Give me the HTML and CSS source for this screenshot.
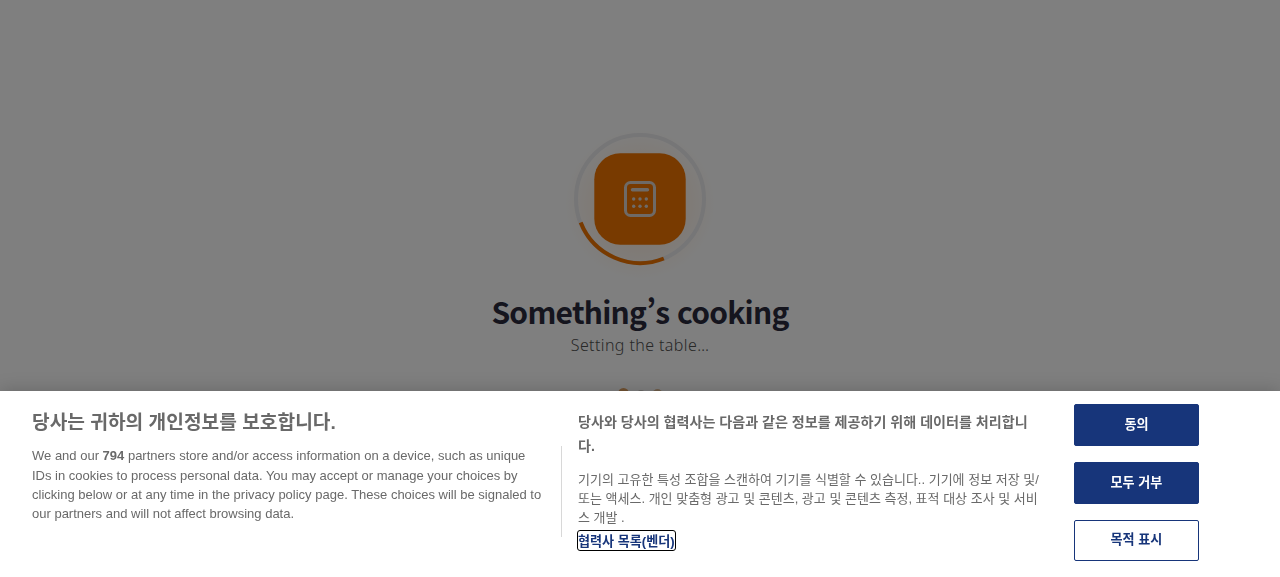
FILE: index.html
```html
<!DOCTYPE html>
<html lang="ko">
<head>
  <meta charset="UTF-8" />
  <meta name="viewport" content="width=device-width, initial-scale=1.0" />
  <title>Something’s cooking</title>
  <link rel="stylesheet" href="styles.css">
</head>
<body>

  <main class="loader">
    <svg class="loader-icon" width="160" height="160" viewBox="0 0 160 160" fill="none">
      <defs>
        <radialGradient id="glow">
          <stop offset="0.5" stop-color="#f47a00" stop-opacity="0.1" />
          <stop offset="1" stop-color="#f47a00" stop-opacity="0" />
        </radialGradient>
      </defs>
      <circle cx="80" cy="84" r="76" fill="url(#glow)" />
      <circle cx="80" cy="79" r="64" stroke="#ececee" stroke-width="4" />
      <path d="M20.7 102.5A64 64 0 0 0 103.8 138.5" stroke="#f07400" stroke-width="4" />
      <rect x="34.3" y="33.3" width="91.4" height="91.4" rx="26" fill="#f07400" />
      <rect x="65.5" y="62.5" width="29" height="33" rx="5" stroke="#ddd5ce" stroke-width="3" />
      <path d="M72.5 69.8H87.5" stroke="#ddd5ce" stroke-width="3.4" stroke-linecap="round" />
      <g fill="#ddd5ce">
        <circle cx="73.7" cy="79" r="1.7" />
        <circle cx="80" cy="79" r="1.7" />
        <circle cx="86.3" cy="79" r="1.7" />
        <circle cx="73.7" cy="86.2" r="1.7" />
        <circle cx="80" cy="86.2" r="1.7" />
        <circle cx="86.3" cy="86.2" r="1.7" />
      </g>
    </svg>
    <h1>Something’s cooking</h1>
    <p>Setting the table…</p>
    <div class="dots">
      <span class="dot dot-active"></span>
      <span class="dot dot-small"></span>
      <span class="dot"></span>
    </div>
  </main>

  <div class="overlay"></div>

  <section class="consent">
    <div class="consent-policy">
      <h2>당사는 귀하의 개인정보를 보호합니다.</h2>
      <p>We and our <b>794</b> partners store and/or access information on a device, such as unique IDs in cookies to process personal data. You may accept or manage your choices by clicking below or at any time in the privacy policy page. These choices will be signaled to our partners and will not affect browsing data.</p>
    </div>

    <div class="consent-vendors">
      <h3>당사와 당사의 협력사는 다음과 같은 정보를 제공하기 위해 데이터를 처리합니다.</h3>
      <p>기기의 고유한 특성 조합을 스캔하여 기기를 식별할 수 있습니다.. 기기에 정보 저장 및/또는 액세스. 개인 맞춤형 광고 및 콘텐츠, 광고 및 콘텐츠 측정, 표적 대상 조사 및 서비스 개발 .</p>
      <button class="vendor-link">협력사 목록(벤더)</button>
    </div>

    <div class="consent-buttons">
      <button class="btn">동의</button>
      <button class="btn">모두 거부</button>
      <button class="btn btn-outline">목적 표시</button>
    </div>
  </section>

</body>
</html>
```
FILE: styles.css
```css
* {
  box-sizing: border-box;
}

body {
  margin: 0;
  height: 577px;
  overflow: hidden;
  background: #fff;
  font-family: "Liberation Sans", "Noto Sans CJK KR", sans-serif;
}

.loader {
  display: flex;
  flex-direction: column;
  align-items: center;
  padding-top: 120px;
}

.loader-icon {
  display: block;
}

.loader h1 {
  margin: 11px 0 2px;
  font-family: "Noto Sans CJK KR", sans-serif;
  font-size: 30px;
  line-height: 40px;
  font-weight: 700;
  letter-spacing: -0.75px;
  color: #2b2b3d;
}

.loader p {
  margin: 0;
  font-family: "Noto Sans", sans-serif;
  font-size: 16px;
  font-weight: 300;
  line-height: 24px;
  letter-spacing: 0.4px;
  color: #505050;
}

.dots {
  display: flex;
  align-items: center;
  gap: 8px;
  margin-top: 31px;
}

.dot {
  width: 9px;
  height: 9px;
  border-radius: 50%;
  background: #e0bc94;
}

.dot-active {
  width: 11px;
  height: 11px;
  background: #e3a564;
}

.dot-small {
  width: 8px;
  height: 8px;
  background: #d5d0cb;
}

.overlay {
  position: fixed;
  inset: 0;
  background: rgba(0, 0, 0, 0.5);
}

.consent {
  position: fixed;
  left: 0;
  right: 0;
  bottom: 0;
  height: 186px;
  display: flex;
  align-items: flex-start;
  padding-left: 32px;
  background: #fff;
  color: #696969;
  box-shadow: 0 0 18px rgba(0, 0, 0, 0.2);
}

.consent-policy {
  width: 513px;
  padding-top: 17px;
}

.consent h2 {
  margin: 0 0 8.2px;
  font-size: 19.2px;
  line-height: 30px;
}

.consent p {
  margin: 0;
  font-size: 13px;
  line-height: 19.4px;
}

.consent-vendors {
  width: 481px;
  margin-left: 16px;
  padding: 19px 0 0 17px;
  background: linear-gradient(#d8d8d8, #d8d8d8) no-repeat 0 55px / 1px 91px;
}

.consent h3 {
  margin: 0 0 12px;
  font-size: 14.08px;
  line-height: 24px;
}

.consent .consent-vendors p {
  line-height: 19px;
}

.vendor-link {
  display: block;
  margin-top: 4px;
  padding: 2px 0 0;
  border: 0;
  border-radius: 2px;
  outline: 1px solid #000;
  background: none;
  color: #17357a;
  font: bold 13.1px/17px "Liberation Sans", "Noto Sans CJK KR", sans-serif;
}

.consent-buttons {
  display: flex;
  flex-direction: column;
  gap: 16px;
  width: 125px;
  margin-left: 32px;
  padding-top: 13px;
}

.btn {
  height: 42px;
  padding: 0 0 2px;
  border: 1px solid #17357a;
  border-radius: 2px;
  background: #17357a;
  color: #fff;
  font: bold 13.1px/19px "Liberation Sans", "Noto Sans CJK KR", sans-serif;
}

.btn-outline {
  height: 41px;
  background: #fff;
  color: #17357a;
}
```
